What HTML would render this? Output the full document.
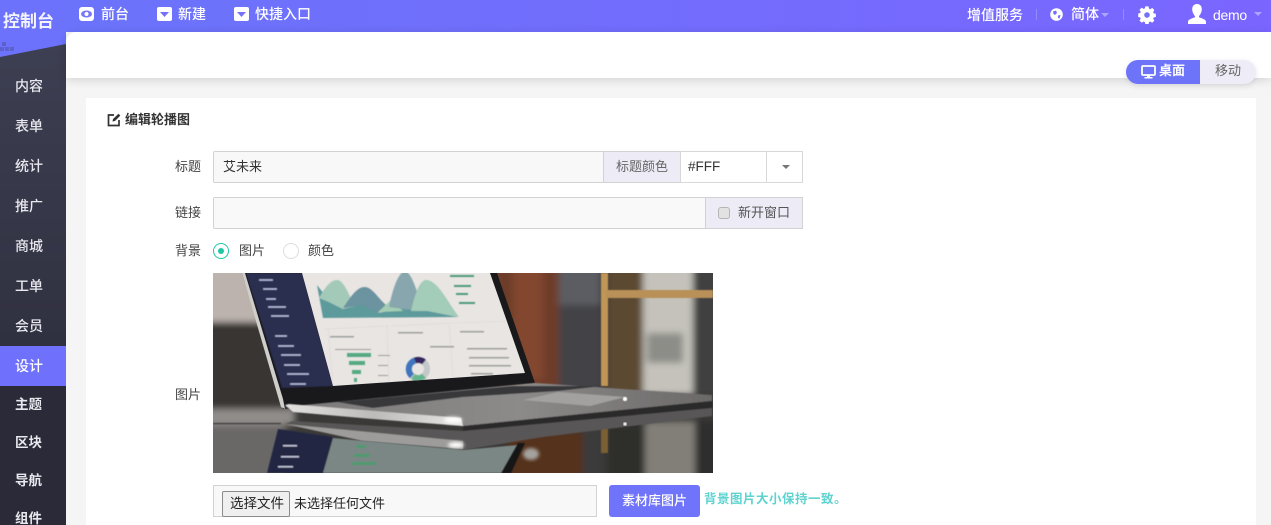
<!DOCTYPE html>
<html lang="zh"><head><meta charset="utf-8"><title>编辑轮播图</title>
<style>
html,body{margin:0;padding:0;width:1271px;height:525px;overflow:hidden;background:#f5f5f5}
body{position:relative;font-family:"Liberation Sans","Noto Sans CJK SC",sans-serif;font-size:13px;color:#444}
.a{position:absolute;white-space:nowrap;line-height:20px}
.box{position:absolute;box-sizing:border-box}
.top{color:#fff;font-size:14px;font-weight:500;top:4px}
.m{position:absolute;left:15px;color:#e8e8ee;font-size:14px;line-height:20px;font-weight:500}
.ic{position:absolute}
</style></head><body>
<div class="box" style="left:0;top:0;width:1271px;height:32px;background:linear-gradient(90deg,#6a74fa,#7a66ff)"></div>
<div class="box" style="left:0;top:0;width:66px;height:60px;background:#6c72fb"></div>
<svg class="ic" style="left:0;top:40px" width="66" height="485"><defs><linearGradient id="sb" x1="0" y1="0" x2="0" y2="1"><stop offset="0" stop-color="#3d3f52"/><stop offset="1" stop-color="#282835"/></linearGradient></defs>
<polygon points="0,17 66,4 66,485 0,485" fill="url(#sb)"/>
<g fill="#5b60cc"><rect x="2" y="2" width="4" height="4"/><rect x="0" y="7" width="4" height="4"/><rect x="5" y="7" width="4" height="4"/><rect x="10" y="7" width="4" height="4"/></g></svg>
<div class="a" style="left:3px;top:12px;color:#f4f4ff;font-size:17px;font-weight:700;line-height:20px;letter-spacing:0">控制台</div>

<div class="m" style="top:76px">内容</div><div class="m" style="top:116px">表单</div><div class="m" style="top:156px">统计</div><div class="m" style="top:196px">推广</div><div class="m" style="top:236px">商城</div><div class="m" style="top:276px">工单</div><div class="m" style="top:316px">会员</div>
<div class="box" style="left:0;top:346px;width:66px;height:40px;background:#6f70fb"></div>
<div class="box" style="left:0;top:386px;width:66px;height:139px;background:#2a2a38"></div>
<div class="m" style="top:356px;color:#fff">设计</div>
<div class="m" style="top:395px;font-size:13.500px;font-weight:700">主题</div><div class="m" style="top:433px;font-size:13.500px;font-weight:700">区块</div><div class="m" style="top:471px;font-size:13.500px;font-weight:700">导航</div><div class="m" style="top:509px;font-size:13.500px;font-weight:700">组件</div>

<!-- top nav -->
<svg class="ic" style="left:79px;top:7px" width="15" height="14"><rect width="15" height="14" rx="3" fill="#fff"/><ellipse cx="7.500" cy="7" rx="5.500" ry="3.500" fill="#7a76f8"/><circle cx="7.500" cy="7" r="2" fill="#fff"/></svg>
<div class="a top" style="left:101px">前台</div>
<svg class="ic" style="left:157px;top:7px" width="15" height="14"><rect width="15" height="14" rx="2" fill="#fff"/><polygon points="3,5 12,5 7.500,10" fill="#7572f9"/></svg>
<div class="a top" style="left:178px">新建</div>
<svg class="ic" style="left:234px;top:7px" width="15" height="14"><rect width="15" height="14" rx="2" fill="#fff"/><polygon points="3,5 12,5 7.500,10" fill="#7572f9"/></svg>
<div class="a top" style="left:255px">快捷入口</div>

<div class="a top" style="left:967px;top:5px;font-size:14px">增值服务</div>
<div class="box" style="left:1036px;top:9px;width:1px;height:11px;background:#8f8cfb"></div>
<svg class="ic" style="left:1050px;top:8px" width="13" height="13"><circle cx="6.500" cy="6.500" r="6.300" fill="#fff"/><path d="M3 3.500 6 2.500 7 5 5 7 3.500 6ZM8 7.500 10.500 7 9.500 10.500 8 10Z" fill="#7570f8"/></svg>
<div class="a top" style="left:1071px">简体</div>
<div class="box" style="left:1101px;top:13px;border:4px solid transparent;border-top-color:#a9a6fb;border-bottom:0"></div>
<div class="box" style="left:1123px;top:9px;width:1px;height:11px;background:#8f8cfb"></div>
<svg class="ic" style="left:1138px;top:6px" width="18" height="18" viewBox="0 0 18 18"><path d="M7.300.8h3.400l.4 2.300 1.400.6 1.900-1.300 2.300 2.300-1.300 1.900.6 1.400 2.200.4v3.300l-2.200.4-.6 1.400 1.300 1.900-2.300 2.300-1.900-1.300-1.400.6-.4 2.200H7.300l-.4-2.200-1.400-.6-1.900 1.300-2.300-2.300 1.300-1.900-.6-1.400-2-.4V8.100l2-.4.6-1.400L1.300 4.400l2.300-2.300 1.900 1.300 1.400-.6Z" fill="#fff" transform="translate(.2 -.4) scale(.97)"/><circle cx="9" cy="9" r="2.800" fill="#7570f8"/></svg>
<svg class="ic" style="left:1187px;top:4px" width="20" height="20" viewBox="0 0 20 20"><path d="M10 0c3 0 4.800 2.200 4.800 5.200S13 11 12 12v1.200c2.500 1 7 2 7 4.500V20H1v-2.300c0-2.500 4.500-3.500 7-4.500V12C7 11 5.200 8.200 5.200 5.200S7 0 10 0Z" fill="#fff"/></svg>
<div class="a" style="left:1213px;top:5px;color:#fff;font-size:14px;letter-spacing:-.3px">demo</div>
<div class="box" style="left:1254px;top:12px;border:4px solid transparent;border-top-color:#a9a6fb;border-bottom:0"></div>

<!-- white header -->
<div class="box" style="left:66px;top:32px;width:1205px;height:46px;background:#fff;border-top-left-radius:10px;box-shadow:0 2px 10px rgba(0,0,0,.14)"></div>
<!-- device switch -->
<div class="box" style="left:1126px;top:60px;width:130px;height:24px;border-radius:12px;background:#eeedf7;box-shadow:0 2px 6px rgba(0,0,0,.1)"></div>
<div class="box" style="left:1126px;top:60px;width:74px;height:24px;border-radius:12px 0 0 12px;background:#6d74f9"></div>
<svg class="ic" style="left:1141px;top:65px" width="15" height="14"><rect x="1" y="1" width="13" height="9" rx="1" fill="none" stroke="#fff" stroke-width="1.800"/><rect x="6" y="10" width="3" height="2" fill="#fff"/><rect x="3.500" y="12" width="8" height="1.500" fill="#fff"/></svg>
<div class="a" style="left:1159px;top:61px;color:#fff;font-weight:700;font-size:13px">桌面</div>
<div class="a" style="left:1215px;top:61px;color:#666;font-size:13px">移动</div>

<!-- card -->
<div class="box" style="left:86px;top:98px;width:1170px;height:427px;background:#fff"></div>
<svg class="ic" style="left:107px;top:113px" width="14" height="14" viewBox="0 0 14 14"><path d="M7 2H1.500v10.500H12V7" fill="none" stroke="#333" stroke-width="1.700"/><path d="M5.500 8.500 6 6 11.500 .8 13.300 2.600 8 8Z" fill="#333"/></svg>
<div class="a" style="left:125px;top:110px;font-size:13px;font-weight:700;color:#333">编辑轮播图</div>

<div class="a" style="left:175px;top:157px">标题</div>
<div class="box" style="left:213px;top:151px;width:391px;height:32px;background:#f8f8f8;border:1px solid #d2d2d2;border-radius:2px 0 0 2px"></div>
<div class="a" style="left:223px;top:157px;color:#333;font-size:13px">艾未来</div>
<div class="box" style="left:603px;top:151px;width:78px;height:32px;background:#ecebf6;border:1px solid #d2d2d2;border-right:0"></div>
<div class="a" style="left:616px;top:157px;color:#666">标题颜色</div>
<div class="box" style="left:680px;top:151px;width:123px;height:32px;background:#fff;border:1px solid #d8d8d8"></div>
<div class="box" style="left:766px;top:152px;width:1px;height:30px;background:#d8d8d8"></div>
<div class="a" style="left:688px;top:157px;color:#333;font-size:13.500px">#FFF</div>
<div class="box" style="left:782px;top:165px;border:4px solid transparent;border-top-color:#777;border-bottom:0"></div>

<div class="a" style="left:175px;top:203px">链接</div>
<div class="box" style="left:213px;top:197px;width:493px;height:32px;background:#f9f9f9;border:1px solid #d2d2d2;border-radius:2px 0 0 2px"></div>
<div class="box" style="left:705px;top:197px;width:98px;height:32px;background:#ecebf6;border:1px solid #d2d2d2"></div>
<div class="box" style="left:718px;top:207px;width:12px;height:12px;background:#e2e2e2;border:1px solid #b5b5b5;border-radius:3px"></div>
<div class="a" style="left:738px;top:203px;color:#555">新开窗口</div>

<div class="a" style="left:175px;top:241px">背景</div>
<div class="box" style="left:213px;top:243px;width:16px;height:16px;border:1px solid #1ec8a5;border-radius:50%"></div>
<div class="box" style="left:218px;top:248px;width:6px;height:6px;background:#1ec8a5;border-radius:50%"></div>
<div class="a" style="left:239px;top:241px">图片</div>
<div class="box" style="left:283px;top:243px;width:16px;height:16px;border:1px solid #ddd;border-radius:50%"></div>
<div class="a" style="left:308px;top:241px">颜色</div>

<div class="a" style="left:175px;top:385px">图片</div>
<!-- photo -->
<svg class="ic" style="left:213px;top:273px" width="500" height="200" viewBox="0 0 500 200">
<defs>
<filter id="b4" x="-10%" y="-10%" width="120%" height="120%"><feGaussianBlur stdDeviation="3.500"/></filter>
<filter id="b1" x="-5%" y="-5%" width="110%" height="110%"><feGaussianBlur stdDeviation=".6"/></filter>
<filter id="b2" x="-20%" y="-20%" width="140%" height="140%"><feGaussianBlur stdDeviation="1.800"/></filter>
<clipPath id="c"><rect width="500" height="200"/></clipPath>
<clipPath id="scr"><polygon points="89,0 277,0 312,100 120,113"/></clipPath>
<linearGradient id="silver" x1="0" y1="0" x2="1" y2="0"><stop offset="0" stop-color="#7c7a79"/><stop offset=".55" stop-color="#8d8b8a"/><stop offset="1" stop-color="#6b6968"/></linearGradient>
<linearGradient id="edge" x1="0" y1="0" x2="1" y2="0"><stop offset="0" stop-color="#e4e2e0"/><stop offset=".5" stop-color="#bdbbb9"/><stop offset="1" stop-color="#e8e6e4"/></linearGradient>
</defs>
<g clip-path="url(#c)">
<rect width="500" height="200" fill="#3b3937"/>
<!-- blurred background -->
<g filter="url(#b4)">
<rect x="-8" y="-8" width="70" height="57" fill="#bcb3ae"/>
<rect x="-8" y="49" width="90" height="87" fill="#383633"/>
<rect x="280" y="-8" width="70" height="125" fill="#6e3c29"/>
<rect x="300" y="-8" width="30" height="115" fill="#82462e"/>
<rect x="346" y="-8" width="42" height="128" fill="#434347"/>
<rect x="346" y="-8" width="42" height="40" fill="#5b5d62"/>
<rect x="394" y="-8" width="40" height="130" fill="#5c4831"/>
<rect x="430" y="-8" width="50" height="130" fill="#c4c2bb"/>
<rect x="480" y="-8" width="28" height="130" fill="#3f4041"/>
<rect x="434" y="60" width="36" height="30" fill="#8d8d88"/>
<rect x="-8" y="136" width="90" height="16" fill="#918d8b"/>
<rect x="-8" y="152" width="80" height="56" fill="#6a6766"/>
<rect x="295" y="158" width="75" height="50" fill="#55321f"/>
<rect x="370" y="150" width="20" height="58" fill="#3a3a3b"/>
<rect x="394" y="150" width="38" height="58" fill="#2f2d2b"/>
<rect x="432" y="148" width="50" height="60" fill="#827f78"/>
<rect x="482" y="148" width="26" height="60" fill="#2e2e2e"/>
</g>
<!-- shelf -->
<g filter="url(#b1)"><rect x="388" y="0" width="7" height="113" fill="#bf9655"/><rect x="393" y="17" width="107" height="8" fill="#b89058"/><rect x="388" y="155" width="7" height="25" fill="#7a6030"/></g>
<!-- lid -->
<polygon points="29,0 284,0 322,110 70,136" fill="#19191c"/>
<polygon points="29,0 32,0 70,126 72,136 68,134" fill="#d0cecb"/>
<polygon points="33,0 89,0 120,113 69,115" fill="#292f50" filter="url(#b1)"/>
<g clip-path="url(#scr)">
<rect x="85" y="0" width="240" height="115" fill="#e9e5e3"/>
<g filter="url(#b1)">
<path d="M104 12 118 30 130 36 150 30 165 40 190 35 215 38 245 44 110 45Z" fill="#5d9a9b"/>
<path d="M106 25C112 14 118 7 124 7 132 7 137 27 143 33L130 36 118 30Z" fill="#a3c9b9"/>
<path d="M130 35C140 20 145 14 152 14 160 14 168 30 176 34L165 40 150 32Z" fill="#6c93a0"/>
<path d="M165 39 178 27 190 38Z" fill="#a4cdb4"/>
<path d="M176 34C180 15 185 0 192-2 200 0 205 25 212 38L190 36Z" fill="#88a6ad"/>
<path d="M198 38C202 20 207 7 213 7 225 7 235 30 246 44L215 38Z" fill="#a3ccb9"/>
<rect x="237" y="2" width="24" height="2" fill="#4f9a7a"/><rect x="241" y="12" width="17" height="2" fill="#4f9a7a"/><rect x="243" y="20" width="12" height="2" fill="#4f9a7a"/><rect x="246" y="29" width="16" height="2" fill="#4f9a7a"/>
<g fill="none" stroke="#dedad8" stroke-width=".8"><path d="M112 56 176 53M178 53 240 50M242 50 296 48M120 113 115 55M176 110 174 53M240 105 236 51"/></g>
<rect x="134" y="80" width="24" height="4" fill="#56aa82"/><rect x="136" y="88" width="16" height="4" fill="#56aa82"/><rect x="139" y="97" width="9" height="4" fill="#56aa82"/><rect x="141" y="105" width="3" height="4" fill="#56aa82"/>
<circle cx="205" cy="96" r="9" fill="none" stroke="#c4c7c8" stroke-width="6"/>
<path d="M199 103A9 9 0 0 1 202 87.500" fill="none" stroke="#3f74bd" stroke-width="6"/>
<path d="M200 103.500A9 9 0 0 0 211 103" fill="none" stroke="#66b58f" stroke-width="6"/>
<path d="M202 87.500A9 9 0 0 1 211 89" fill="none" stroke="#35285f" stroke-width="6"/>
<g fill="#9da09f"><rect x="117" y="63" width="24" height="1.500"/><rect x="185" y="59" width="25" height="1.500"/><rect x="247" y="58" width="24" height="1.500"/><rect x="122" y="76" width="36" height="1"/><rect x="217" y="73" width="24" height="1.500"/><rect x="254" y="75" width="40" height="1.500"/><rect x="256" y="84" width="40" height="1.500"/><rect x="256" y="92" width="42" height="1.500"/><rect x="258" y="100" width="22" height="1.500"/><rect x="165" y="82" width="12" height="1"/><rect x="165" y="92" width="10" height="1"/><rect x="165" y="102" width="10" height="1"/></g>
</g></g>
<g fill="#aeb4cd" filter="url(#b1)"><rect x="46" y="6" width="14" height="2"/><rect x="50" y="15" width="14" height="2"/><rect x="53" y="25" width="10" height="2"/><rect x="55" y="33" width="18" height="2"/><rect x="58" y="42" width="18" height="2"/><rect x="62" y="62" width="12" height="2"/><rect x="65" y="72" width="16" height="2"/><rect x="68" y="81" width="20" height="2"/><rect x="71" y="91" width="16" height="2"/><rect x="74" y="100" width="22" height="2"/><rect x="77" y="110" width="16" height="2"/></g>
<!-- base -->
<g filter="url(#b1)">
<polygon points="70,134 322,110 499,122 499,128 250,153" fill="url(#silver)"/>
<polygon points="124,129 300,113 390,113 345,118 250,124 160,135" fill="#37373a"/>
<polygon points="345,119 412,124 377,133 310,127" fill="#a3a1a0"/>
<polygon points="72,132 76,131 248,145 250,153 160,146 80,139" fill="url(#edge)"/>
<polygon points="250,153 499,128 499,135 250,158" fill="#2b2a2a"/>
<polygon points="72,151 80,148 250,158 499,135 499,143 330,164 250,177 150,168" fill="#595756"/>
<polygon points="72,151 250,168 250,176 150,168" fill="#9e9c9a"/>
<rect x="0" y="150" width="68" height="1.200" fill="#3a3838"/>
</g>
<g filter="url(#b2)"><ellipse cx="240" cy="147" rx="9" ry="3" fill="#fff"/><ellipse cx="243" cy="172" rx="8" ry="3" fill="#fff"/></g>
<circle cx="412" cy="126" r="2.200" fill="#fff" filter="url(#b1)"/>
<circle cx="412" cy="151" r="1.800" fill="#eee" filter="url(#b1)"/>
<!-- reflected screen -->
<g filter="url(#b1)">
<polygon points="65,156 120,164 110,200 54,200" fill="#232742"/>
<polygon points="120,165 250,177 305,172 290,200 110,200" fill="#7a8785"/>
<polygon points="305,170 312,170 298,200 288,200" fill="#151515"/>
<rect x="143" y="172" width="10" height="3" fill="#4f9a70"/><rect x="141" y="181" width="16" height="3" fill="#4f9a70"/><rect x="139" y="189" width="24" height="3" fill="#4f9a70"/>
<g fill="#bfc3d6"><rect x="70" y="172" width="14" height="1.500"/><rect x="68" y="183" width="18" height="1.500"/><rect x="65" y="193" width="15" height="1.500"/></g>
</g>
<ellipse cx="318" cy="181" rx="8" ry="6" fill="#a5a39f" filter="url(#b2)"/>
</g></svg>

<!-- file row -->
<div class="box" style="left:213px;top:485px;width:384px;height:32px;background:#f8f8f8;border:1px solid #d2d2d2"></div>
<div class="box" style="left:222px;top:491px;width:68px;height:26px;background:#efefef;border:1px solid #8a8a8a;border-radius:2px"></div>
<div class="a" style="left:230px;top:494px;color:#222;font-size:13.500px">选择文件</div>
<div class="a" style="left:294px;top:494px;color:#222;font-size:13px">未选择任何文件</div>
<div class="box" style="left:609px;top:485px;width:91px;height:32px;background:#6f74fa;border-radius:3px"></div>
<div class="a" style="left:622px;top:491px;color:#fff;font-size:13px;font-weight:500">素材库图片</div>
<div class="a" style="left:704px;top:489px;color:#5fd3d0;font-size:12.500px;font-weight:700;letter-spacing:.5px">背景图片大小保持一致。</div>
</body></html>
